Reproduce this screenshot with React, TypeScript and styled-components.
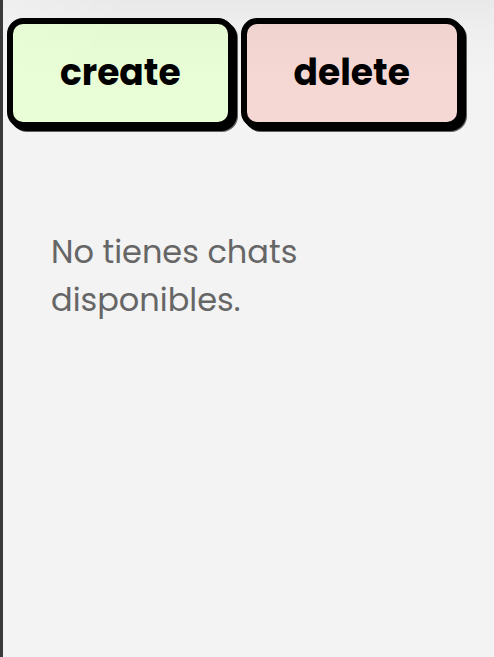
import React from "react";
import styled, { createGlobalStyle } from "styled-components";

const GlobalStyle = createGlobalStyle`
  body {
    margin: 0;
    background: #f3f3f3;
    font-family: Poppins, Inter, "Open Sans", sans-serif;
  }
`;

const Panel = styled.main`
  position: relative;
  box-sizing: border-box;
  min-height: 100vh;
  border-left: 3px solid #3a3a3a;
  background: #f3f3f3;

  &::before {
    content: "";
    position: absolute;
    inset: 0 0 auto;
    height: 80px;
    background: linear-gradient(
      rgba(0, 0, 0, 0.04),
      rgba(0, 0, 0, 0.016) 40%,
      rgba(0, 0, 0, 0)
    );
    mask-image: linear-gradient(to right, rgba(0, 0, 0, 0.4), #000 120px);
    pointer-events: none;
  }
`;

const Actions = styled.div`
  display: flex;
  gap: 7px;
  padding: 18px 4px 0;
`;

const ActionButton = styled.button<{ $fill: string }>`
  height: 110px;
  padding: 0 47px;
  border: 6px solid #000;
  border-radius: 16px;
  background: ${({ $fill }) => $fill};
  box-shadow: 3px 3px 0 #000, 4px 4px 0 rgba(0, 0, 0, 0.6);
  color: #000;
  font: inherit;
  font-size: 36px;
  font-weight: 700;
  line-height: 48px;
  cursor: pointer;
`;

const EmptyMessage = styled.p`
  max-width: 320px;
  margin: 100px 48px 0;
  color: #666;
  font-size: 32px;
  line-height: 48px;
`;

export default function App() {
  return (
    <>
      <GlobalStyle />
      <Panel>
        <Actions>
          <ActionButton type="button" $fill="#e9fed7">create</ActionButton>
          <ActionButton type="button" $fill="#f5d7d4">delete</ActionButton>
        </Actions>
        <EmptyMessage>No tienes chats disponibles.</EmptyMessage>
      </Panel>
    </>
  );
}
